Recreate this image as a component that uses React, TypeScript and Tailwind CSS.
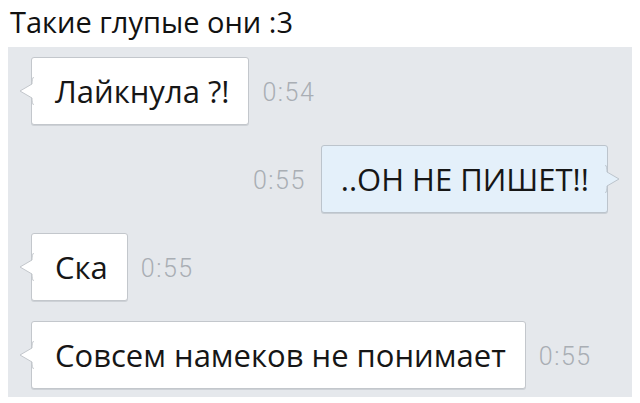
import React from 'react'

type Msg = { text: string; time: string; out?: boolean }

const messages: Msg[] = [
  { text: 'Лайкнула ?!', time: '0:54' },
  { text: '..ОН НЕ ПИШЕТ!!', time: '0:55', out: true },
  { text: 'Ска', time: '0:55' },
  { text: 'Совсем намеков не понимает', time: '0:55' },
]

// little pointer on the side of a bubble
function Tail({ out }: { out?: boolean }) {
  const fill = out ? '#e4f0fa' : '#ffffff'
  return (
    <svg
      width="16"
      height="30"
      viewBox="0 0 16 30"
      className={out ? 'absolute -right-[14px] top-1/2 -translate-y-1/2' : 'absolute -left-[14px] top-1/2 -translate-y-1/2'}
    >
      {out ? (
        <>
          <path d="M0 1 L2 4 L2 8 L14 15 L2 22 L2 26 L0 29 Z" fill={fill} />
          <path d="M0.5 1 Q2 3 2 6 L2 8 L14 15 L2 22 L2 24 Q2 27 0.5 29" fill="none" stroke="#bcc4cc" strokeWidth="1" />
        </>
      ) : (
        <>
          <path d="M16 1 L14 4 L14 8 L2 15 L14 22 L14 26 L16 29 Z" fill={fill} />
          <path d="M15.5 1 Q14 3 14 6 L14 8 L2 15 L14 22 L14 24 Q14 27 15.5 29" fill="none" stroke="#c3c7cc" strokeWidth="1" />
        </>
      )}
    </svg>
  )
}

function Bubble({ msg }: { msg: Msg }) {
  const time = (
    <span className="font-['Roboto',sans-serif] text-[25px] font-light text-[#a9aeb4] tracking-[1.5px] pt-1">{msg.time}</span>
  )
  return (
    <div className={msg.out ? 'flex items-center justify-end gap-[15px]' : 'flex items-center gap-[13px]'}>
      {msg.out && time}
      <div
        className={
          msg.out
            ? 'relative h-[68px] flex items-center pl-[19px] pr-[18px] rounded-[3px] border border-[#bcc4cc] bg-[#e4f0fa] shadow-[0_1px_0_#c9cfd5]'
            : 'relative h-[68px] flex items-center pl-[23px] pr-[19px] rounded-[3px] border border-[#c3c7cc] bg-white shadow-[0_1px_0_#cdd1d6]'
        }
      >
        <Tail out={msg.out} />
        <span className="text-[31px] text-[#161616] leading-none">{msg.text}</span>
      </div>
      {!msg.out && time}
    </div>
  )
}

export default function App() {
  return (
    <div className="w-[640px] h-[403px] bg-white font-['Open_Sans','Liberation_Sans',sans-serif] overflow-hidden">
      <div className="pl-[10px] pt-[2px] h-[47px] text-[29px] text-[#111] leading-[40px]">Такие глупые они :3</div>
      <div className="mx-[8px] h-[350px] bg-[#e5e8ec] pl-[23px] pr-[24px] pt-[10px] flex flex-col gap-[20px]">
        {messages.map((m, i) => (
          <Bubble key={i} msg={m} />
        ))}
      </div>
    </div>
  )
}
